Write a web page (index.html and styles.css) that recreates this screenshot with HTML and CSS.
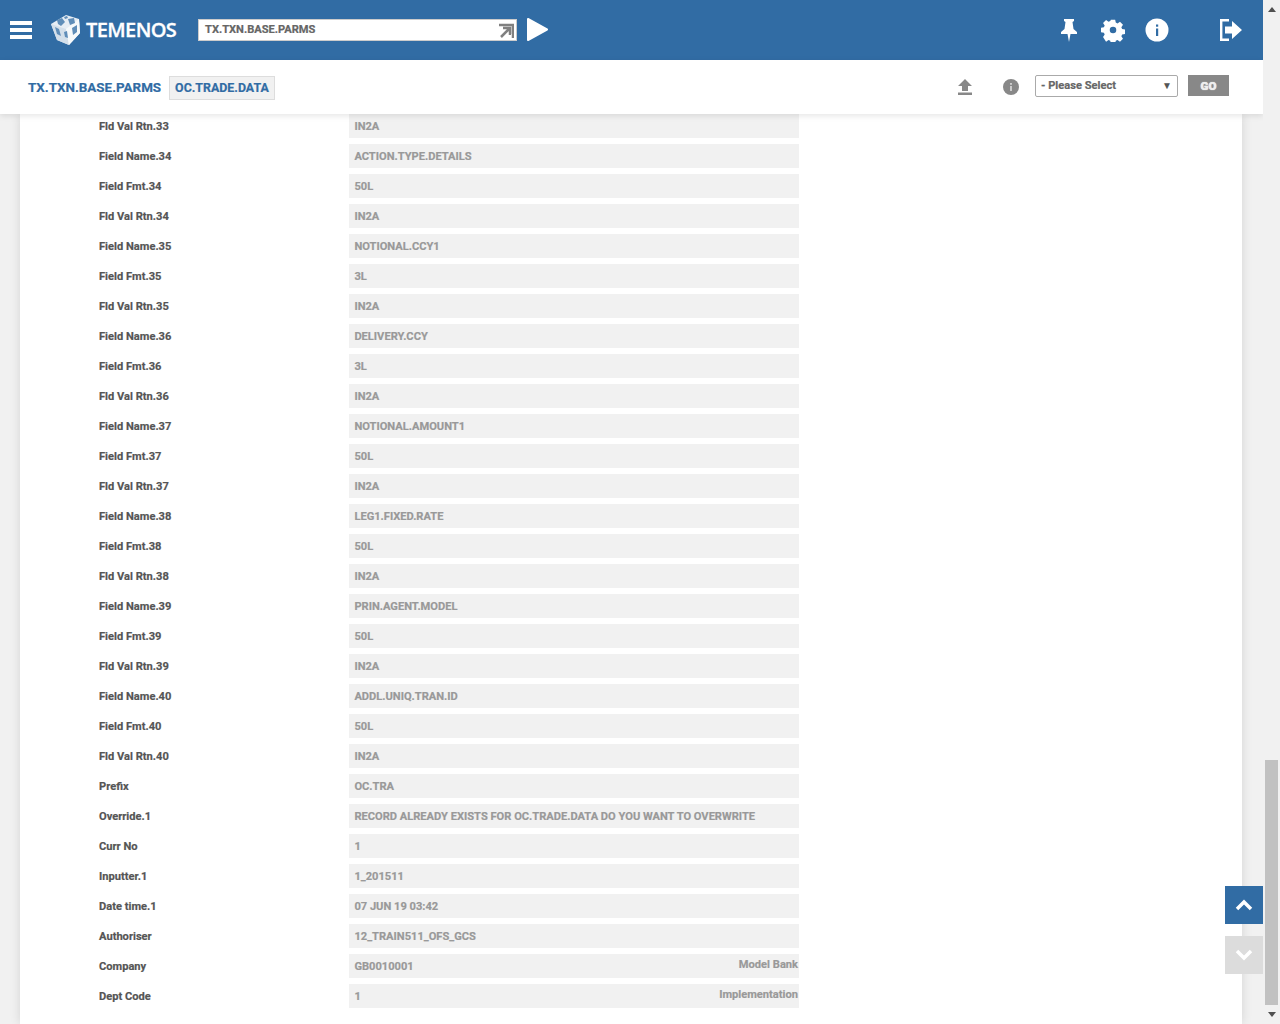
FILE: index.html
```html
<!DOCTYPE html>
<html lang="en">
<head>
<meta charset="utf-8">
<title>TX.TXN.BASE.PARMS</title>
<link rel="stylesheet" href="styles.css">
</head>
<body>
<div class="app">
  <div class="page">
    <header class="topbar">
      <svg class="menu-icon" viewBox="0 0 22 18" width="22" height="18"><rect width="22" height="4" y="0" fill="#fff"/><rect width="22" height="4" y="7" fill="#fff"/><rect width="22" height="4" y="14" fill="#fff"/></svg>
      <div class="logo">
        <svg class="cube" viewBox="0 0 32 32" width="32" height="32">
          <path d="M16 1 29 5 30 19 19 31 7 26 1 10Z" fill="#e6edf4"/>
          <path d="M1 10 16 15 19 31 7 26Z" fill="#d3dfea"/>
          <path d="M16 15 29 5 30 19 19 31Z" fill="#f6f9fb"/>
          <path d="M7 6 12 4 15 8 11 12 8 10ZM18 5 24 4 25 9 20 11ZM22 14 27 11 27 18 23 21ZM5 13 9 15 11 22 7 20ZM14 18 17 17 18 24 15 23ZM14 3 17 2 18 4 15 5Z" fill="#5f8db8"/>
        </svg>
        <span class="logo-text">TEMENOS</span>
      </div>
      <div class="search">
        <span class="search-text">TX.TXN.BASE.PARMS</span>
        <svg class="search-icon" viewBox="0 0 16 16" width="16" height="16"><path d="M1 2H15V15M3 14 11.500 5.500M5 5H12V12" fill="none" stroke="#808080" stroke-width="2.500"/></svg>
      </div>
      <svg class="play" viewBox="0 0 21 23" width="21" height="23"><path d="M1 1 20 11.500 1 22Z" fill="#fff" stroke="#fff" stroke-width="2" stroke-linejoin="round"/></svg>
      <div class="top-actions">
        <svg class="pin" viewBox="0 0 16 24" width="16" height="24"><path d="M3 1H13V3L11.500 4 12.500 11 16 14V16H9.500L8 24 6.500 16H0V14L3.500 11 4.500 4 3 3Z" fill="#fff"/></svg>
        <svg class="gear" viewBox="0 0 24 24" width="24" height="24"><path fill="#fff" fill-rule="evenodd" d="M9.500 0h5l.7 3.400 2 .9L20.100 2.400l3.500 3.500-1.900 2.900.9 2 3.400.7v5l-3.400.7-.9 2 1.900 2.900-3.500 3.500-2.900-1.900-2 .9-.7 3.400h-5l-.7-3.400-2-.9-2.900 1.900L.4 20.100l1.900-2.900-.9-2L-2 14.500v-5l3.400-.7.9-2L.4 3.900 3.900.4l2.900 1.900 2-.9ZM12 8.200a3.800 3.800 0 1 0 0 7.600 3.800 3.800 0 0 0 0-7.600Z" transform="translate(1.700 1.700) scale(.86)"/></svg>
        <svg class="info" viewBox="0 0 24 24" width="24" height="24"><circle cx="12" cy="12" r="11.500" fill="#fff"/><rect x="11" y="10.500" width="2.200" height="7.500" fill="#316ca4"/><rect x="11" y="6.500" width="2.200" height="2.200" fill="#316ca4"/></svg>
        <svg class="logout" viewBox="0 0 22 22" width="22" height="22"><path d="M9 1.200H1.200V20.800H9" fill="none" stroke="#fff" stroke-width="2.400"/><path d="M5 7.500H12V2L22 11 12 20V14.500H5Z" fill="#fff"/></svg>
      </div>
    </header>
    <div class="subbar">
      <span class="crumb">TX.TXN.BASE.PARMS</span>
      <span class="tab">OC.TRADE.DATA</span>
      <div class="sub-actions">
        <svg class="upload" viewBox="0 0 14 16" width="14" height="16"><path d="M7 0 14 7H10V12H4V7H0Z" fill="#888"/><rect y="13.500" width="14" height="2.500" fill="#888"/></svg>
        <svg class="info-small" viewBox="0 0 16 16" width="16" height="16"><circle cx="8" cy="8" r="8" fill="#888"/><rect x="7.200" y="7" width="1.600" height="5" fill="#ddd"/><rect x="7.200" y="4" width="1.600" height="1.800" fill="#ddd"/></svg>
        <div class="select"><span>- Please Select</span><span class="caret">▼</span></div>
        <button class="go">GO</button>
      </div>
    </div>
    <main class="panel">
      <div class="row"><div class="label">Fld Val Rtn.33</div><div class="value">IN2A</div></div>
      <div class="row"><div class="label">Field Name.34</div><div class="value">ACTION.TYPE.DETAILS</div></div>
      <div class="row"><div class="label">Field Fmt.34</div><div class="value">50L</div></div>
      <div class="row"><div class="label">Fld Val Rtn.34</div><div class="value">IN2A</div></div>
      <div class="row"><div class="label">Field Name.35</div><div class="value">NOTIONAL.CCY1</div></div>
      <div class="row"><div class="label">Field Fmt.35</div><div class="value">3L</div></div>
      <div class="row"><div class="label">Fld Val Rtn.35</div><div class="value">IN2A</div></div>
      <div class="row"><div class="label">Field Name.36</div><div class="value">DELIVERY.CCY</div></div>
      <div class="row"><div class="label">Field Fmt.36</div><div class="value">3L</div></div>
      <div class="row"><div class="label">Fld Val Rtn.36</div><div class="value">IN2A</div></div>
      <div class="row"><div class="label">Field Name.37</div><div class="value">NOTIONAL.AMOUNT1</div></div>
      <div class="row"><div class="label">Field Fmt.37</div><div class="value">50L</div></div>
      <div class="row"><div class="label">Fld Val Rtn.37</div><div class="value">IN2A</div></div>
      <div class="row"><div class="label">Field Name.38</div><div class="value">LEG1.FIXED.RATE</div></div>
      <div class="row"><div class="label">Field Fmt.38</div><div class="value">50L</div></div>
      <div class="row"><div class="label">Fld Val Rtn.38</div><div class="value">IN2A</div></div>
      <div class="row"><div class="label">Field Name.39</div><div class="value">PRIN.AGENT.MODEL</div></div>
      <div class="row"><div class="label">Field Fmt.39</div><div class="value">50L</div></div>
      <div class="row"><div class="label">Fld Val Rtn.39</div><div class="value">IN2A</div></div>
      <div class="row"><div class="label">Field Name.40</div><div class="value">ADDL.UNIQ.TRAN.ID</div></div>
      <div class="row"><div class="label">Field Fmt.40</div><div class="value">50L</div></div>
      <div class="row"><div class="label">Fld Val Rtn.40</div><div class="value">IN2A</div></div>
      <div class="row"><div class="label">Prefix</div><div class="value">OC.TRA</div></div>
      <div class="row"><div class="label">Override.1</div><div class="value">RECORD ALREADY EXISTS FOR OC.TRADE.DATA DO YOU WANT TO OVERWRITE</div></div>
      <div class="row"><div class="label">Curr No</div><div class="value">1</div></div>
      <div class="row"><div class="label">Inputter.1</div><div class="value">1_201511</div></div>
      <div class="row"><div class="label">Date time.1</div><div class="value">07 JUN 19 03:42</div></div>
      <div class="row"><div class="label">Authoriser</div><div class="value">12_TRAIN511_OFS_GCS</div></div>
      <div class="row"><div class="label">Company</div><div class="value">GB0010001<span class="enrich">Model Bank</span></div></div>
      <div class="row"><div class="label">Dept Code</div><div class="value">1<span class="enrich">Implementation</span></div></div>
    </main>
    <button class="float-btn up"><svg viewBox="0 0 18 12" width="18" height="12"><path d="M2 10 9 3 16 10" fill="none" stroke="#fff" stroke-width="3.500"/></svg></button>
    <button class="float-btn down"><svg viewBox="0 0 18 12" width="18" height="12"><path d="M2 2 9 9 16 2" fill="none" stroke="#fff" stroke-width="3.500"/></svg></button>
  </div>
  <div class="scrollbar">
    <svg viewBox="0 0 8 5" width="8" height="5"><path d="M4 0 8 5H0Z" fill="#505050"/></svg>
    <div class="scroll-track"><div class="scroll-thumb"></div></div>
    <svg viewBox="0 0 8 5" width="8" height="5"><path d="M0 0H8L4 5Z" fill="#505050"/></svg>
  </div>
</div>
</body>
</html>
```
FILE: styles.css
```css
* { box-sizing: border-box; }
html, body { margin: 0; height: 100%; overflow: hidden; }
body { font-family: Roboto, "Liberation Sans", sans-serif; font-size: 11.12px; font-weight: 700; background: #f1f1f1; -webkit-text-stroke: .2px; }
.app { display: flex; width: 1280px; height: 1024px; }
.page { position: relative; width: 1263px; height: 1024px; display: flex; flex-direction: column; overflow: hidden; }

.topbar { flex: none; height: 60px; background: #316ca4; display: flex; align-items: center; padding-left: 10px; }
.menu-icon { flex: none; margin-top: -1px; }
.logo { display: flex; align-items: center; margin-left: 16px; width: 150px; }
.cube { flex: none; margin-left: 2px; margin-top: -1px; }
.logo-text { margin-left: 4px; margin-top: -1px; font-family: "Open Sans", sans-serif; font-weight: 600; font-size: 20px; letter-spacing: -.6px; color: #fff; -webkit-text-stroke: .3px #fff; }
.search { width: 319px; height: 22px; background: #fff; border: 1px solid #ccc; display: flex; align-items: center; justify-content: space-between; padding: 0 0 0 6px; color: #666; }
.search-text { margin-top: -2px; }
.search-icon { margin-right: 2px; margin-top: 2px; }
.play { flex: none; margin-left: 10px; margin-top: -1px; }
.top-actions { margin-left: auto; display: flex; align-items: center; }
.pin { margin-right: 24px; margin-top: -1px; }
.gear { margin-right: 20px; }
.info { margin-right: 51px; }
.logout { margin-right: 21px; }

.subbar { position: relative; z-index: 2; flex: none; height: 54px; background: #fff; box-shadow: 0 2px 6px rgba(0,0,0,.1); display: flex; align-items: center; padding-left: 28px; color: #316ca4; }
.crumb { font-size: 13.4px; }
.tab { margin-left: 8px; height: 24px; line-height: 21px; padding: 0 5px; font-size: 12.4px; background: #f1f1f1; border: 1px solid #ddd; margin-top: 2px; }
.sub-actions { margin-left: auto; display: flex; align-items: center; padding-right: 34px; margin-top: -3px; color: #666; }
.upload { margin-right: 31px; margin-top: 2px; }
.info-small { margin-right: 16px; margin-top: 2px; }
.select { width: 143px; height: 22px; border: 1px solid #aaa; border-radius: 2px; display: flex; align-items: center; justify-content: space-between; padding: 0 5px; color: #666; }
.caret { font-size: 10px; color: #555; -webkit-text-stroke: 0; }
.go { width: 41px; height: 21px; margin-left: 10px; border: 0; padding: 0; background: #888; color: #eee; font: 900 11.5px Roboto, sans-serif; text-shadow: 0 0 1px #fff; }

.panel { flex: 1; margin: 0 21px 0 20px; background: #fff; box-shadow: 0 0 10px rgba(0,0,0,.12); padding-left: 79px; display: flex; flex-direction: column; gap: 6px; }
.row { flex: none; display: flex; height: 24px; align-items: center; }
.label { width: 250px; color: #555; }
.value { width: 450px; height: 24px; line-height: 25px; padding: 0 1px 0 5.4px; background: #f1f1f1; color: #999; display: flex; justify-content: space-between; }
.enrich { line-height: 21px; }

.float-btn { position: absolute; right: 0; width: 38px; height: 38px; border: 0; padding: 0; display: flex; align-items: center; justify-content: center; z-index: 3; }
.up { top: 886px; background: #316ca4; }
.down { top: 936px; background: #dcdcdc; }

.scrollbar { width: 17px; height: 1024px; background: #f1f1f1; display: flex; flex-direction: column; align-items: center; padding: 7px 0 7px; }
.scroll-track { flex: 1; width: 100%; padding: 748px 2px 5px; }
.scroll-thumb { height: 245px; background: #c1c1c1; }
```
